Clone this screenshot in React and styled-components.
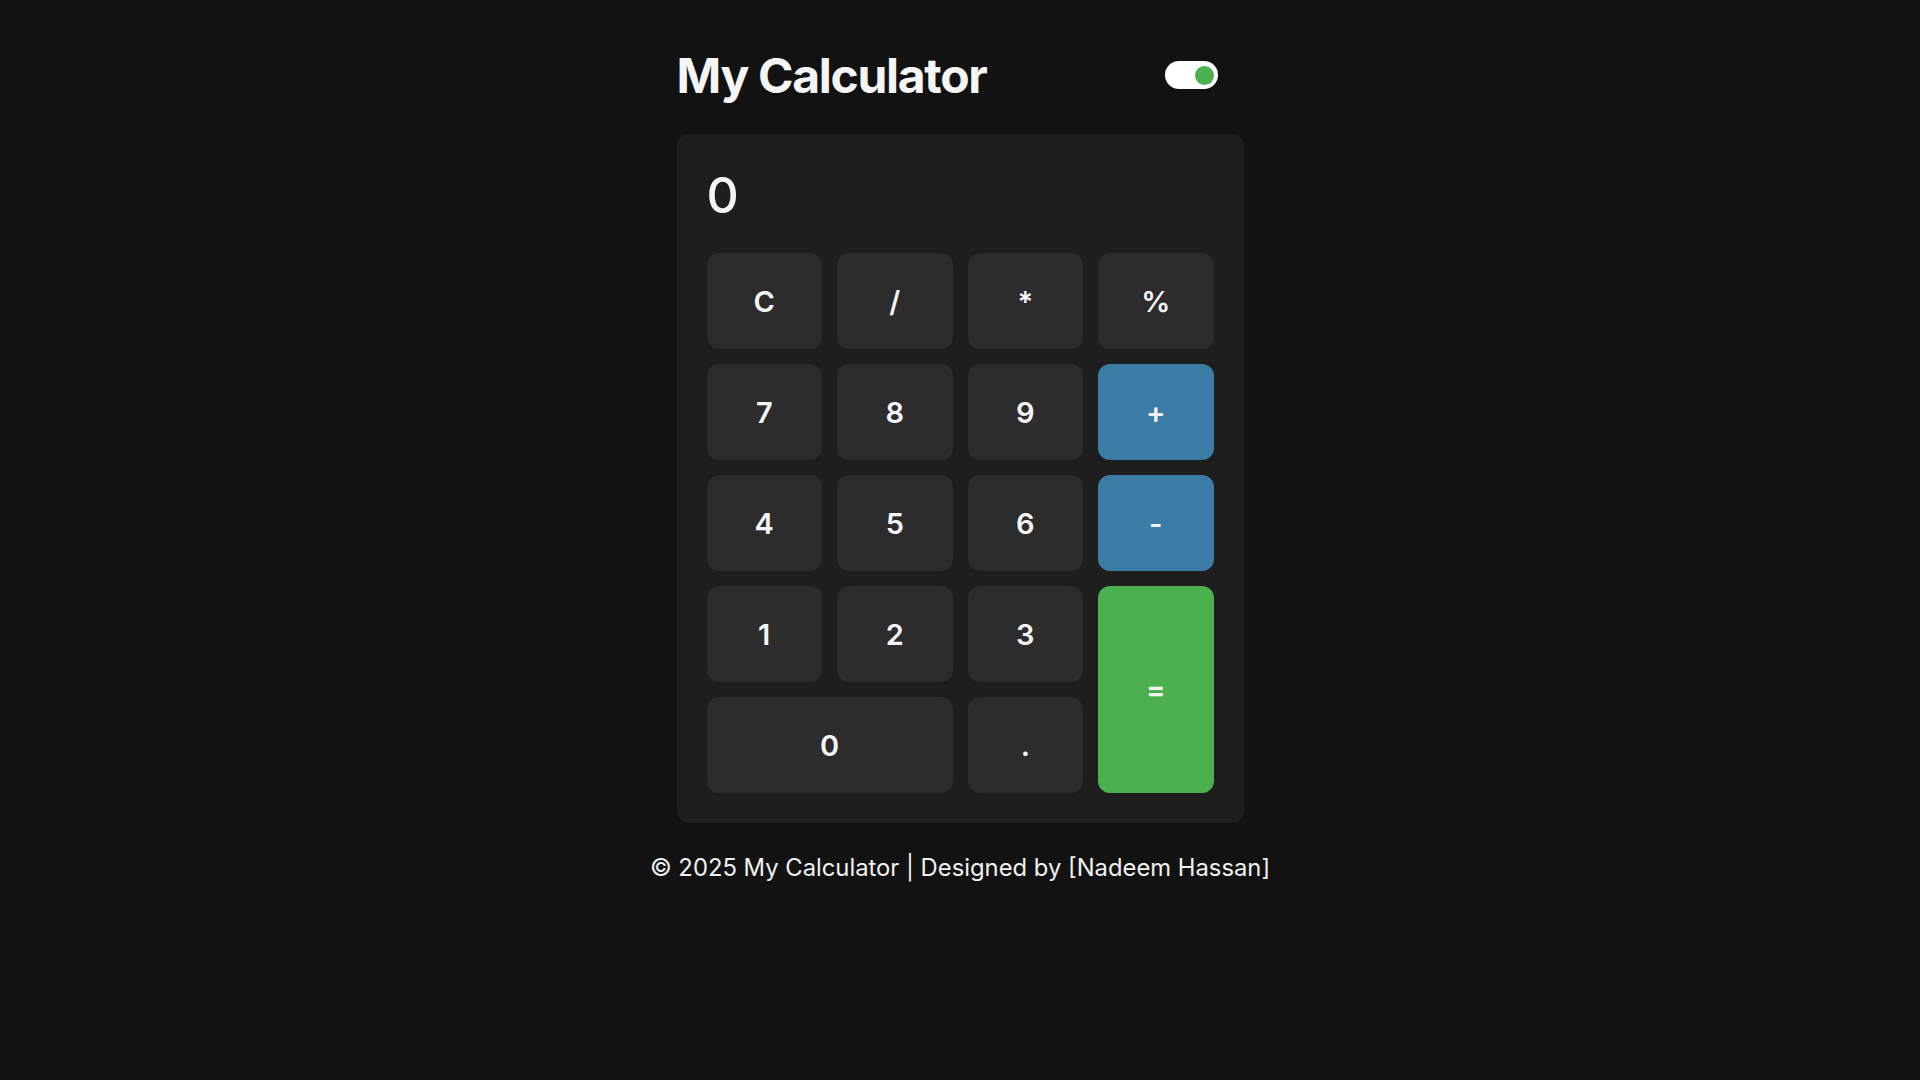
import React, { useState } from 'react';
import styled, { createGlobalStyle } from 'styled-components';

const GlobalStyle = createGlobalStyle`
  * { box-sizing: border-box; }
  body {
    margin: 0;
    background-color: #121212;
    color: #f5f5f5;
    font-family: 'Inter', 'Noto Sans', sans-serif;
  }
`;

const Page = styled.div`
  min-height: 100vh;
  display: flex;
  flex-direction: column;
  align-items: center;
  padding-top: 47px;
`;

const Header = styled.header`
  width: 567px;
  display: flex;
  justify-content: space-between;
  align-items: center;
  padding-right: 26px;
  margin-bottom: 29px;
`;

const Title = styled.h1`
  margin: 0;
  font-size: 48px;
  line-height: 58px;
  font-weight: 700;
  letter-spacing: -1.3px;
  color: #f5f5f5;
`;

const Toggle = styled.button`
  width: 53px;
  height: 28px;
  border: none;
  border-radius: 14px;
  background: #ffffff;
  padding: 0 4px;
  display: flex;
  align-items: center;
  justify-content: ${(p) => (p.on ? 'flex-end' : 'flex-start')};
  margin-bottom: 2px;
  cursor: pointer;

  span {
    width: 19px;
    height: 19px;
    border-radius: 50%;
    background: #4caf50;
  }
`;

const Calculator = styled.div`
  width: 567px;
  background-color: #1e1e1e;
  border-radius: 12px;
  padding: 28px 30px 30px;
`;

const Display = styled.div`
  font-size: 50px;
  font-weight: 500;
  line-height: 60px;
  height: 60px;
  margin: 3px 0 28px;
  color: #f5f5f5;
`;

const Keys = styled.div`
  display: grid;
  grid-template-columns: repeat(4, 1fr);
  grid-auto-rows: 96px;
  gap: 15px;
`;

const Key = styled.button`
  border: none;
  border-radius: 12px;
  font-family: 'Inter', 'Noto Sans', sans-serif;
  font-size: 29px;
  font-weight: 600;
  color: #f5f5f5;
  background-color: ${(p) =>
    p.variant === 'op' ? '#3a7ca5' : p.variant === 'equal' ? '#4caf50' : '#2c2c2c'};
  grid-column: ${(p) => (p.wide ? 'span 2' : 'auto')};
  grid-row: ${(p) => (p.tall ? 'span 2' : 'auto')};
  cursor: pointer;
`;

const Footer = styled.footer`
  margin-top: 30px;
  font-size: 23.8px;
  line-height: 29px;
  color: #f0f0f0;
`;

const keys = [
  { label: 'C' },
  { label: '/' },
  { label: '*' },
  { label: '%' },
  { label: '7' },
  { label: '8' },
  { label: '9' },
  { label: '+', variant: 'op' },
  { label: '4' },
  { label: '5' },
  { label: '6' },
  { label: '-', variant: 'op' },
  { label: '1' },
  { label: '2' },
  { label: '3' },
  { label: '=', variant: 'equal', tall: true },
  { label: '0', wide: true },
  { label: '.' },
];

export default function App() {
  const [dark, setDark] = useState(true);

  return (
    <>
      <GlobalStyle />
      <Page>
        <Header>
          <Title>My Calculator</Title>
          <Toggle on={dark ? 1 : 0} onClick={() => setDark(!dark)} aria-label="toggle theme">
            <span />
          </Toggle>
        </Header>

        <Calculator>
          <Display>0</Display>
          <Keys>
            {keys.map((k) => (
              <Key key={k.label} variant={k.variant} wide={k.wide ? 1 : 0} tall={k.tall ? 1 : 0}>
                {k.label}
              </Key>
            ))}
          </Keys>
        </Calculator>

        <Footer>© 2025 My Calculator | Designed by [Nadeem Hassan]</Footer>
      </Page>
    </>
  );
}
